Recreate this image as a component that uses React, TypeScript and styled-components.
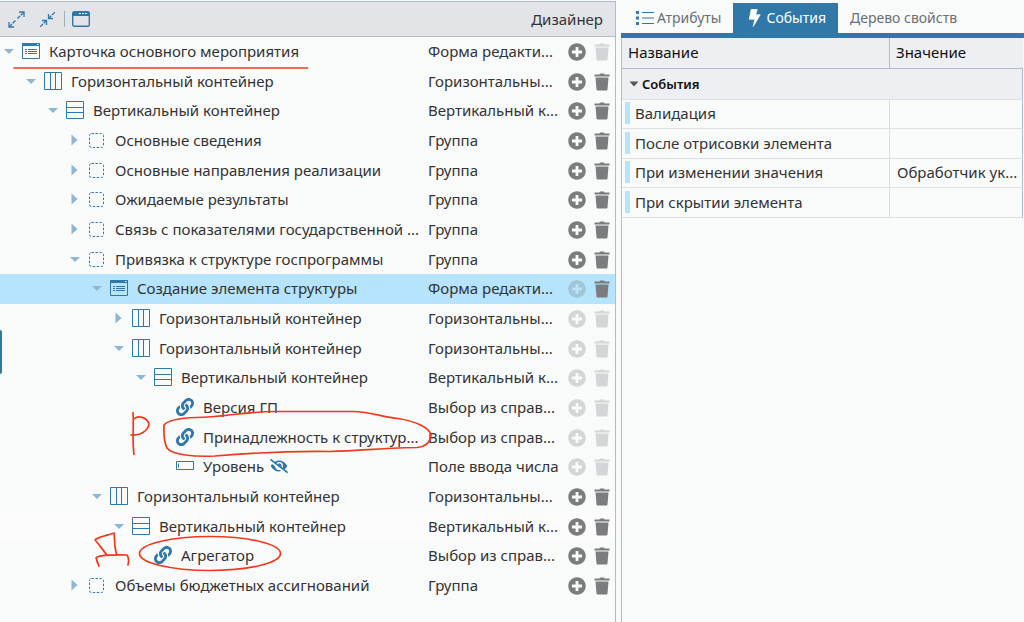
import React from "react";
import styled, { createGlobalStyle, css } from "styled-components";
import { FaEyeSlash, FaLink, FaPlusCircle } from "react-icons/fa";

const blue = "#2f78a7";
const line = "#b3bcc9";

const GlobalStyle = createGlobalStyle`
  *, *::before, *::after { box-sizing: border-box; }
  body {
    margin: 0;
    background: #f9fbfa;
    color: #333;
    font: 15px/20px "Noto Sans", "Open Sans", sans-serif;
  }
  button { font: inherit; color: inherit; }
`;

const Page = styled.div`
  position: relative;
  display: flex;
  gap: 5px;
  min-height: 100vh;
  overflow: hidden;
`;

const DesignerPanel = styled.section`
  flex: 1;
  min-width: 0;
  margin-top: 1px;
  border-top: 1px solid ${line};
  border-right: 1px solid ${line};
`;

const Toolbar = styled.header`
  display: flex;
  align-items: center;
  height: 35px;
  padding: 0 12px 0 8px;
  background: #e3e4e8;
  border-bottom: 1px solid ${line};
`;

const Title = styled.h1`
  margin: 0 0 0 auto;
  font-size: 15px;
  font-weight: 400;
`;

const IconButton = styled.button<{ $tone?: string }>`
  display: inline-flex;
  padding: 0;
  border: 0;
  background: none;
  color: ${(p) => p.$tone || blue};
`;

const ToolGroup = styled.div`
  display: flex;
  align-items: center;
  gap: 14px;
`;

const Divider = styled.span`
  width: 1px;
  height: 16px;
  margin: 0 7px 0 8px;
  background: #9eb0bf;
`;

const Tree = styled.table`
  width: 100%;
  border-collapse: collapse;
  table-layout: fixed;
`;

const TypeCol = styled.col`
  width: 137px;
`;

const ActionsCol = styled.col`
  width: 50px;
`;

const TreeRow = styled.tr<{ $selected?: boolean; $hovered?: boolean }>`
  height: 30px;
  &:nth-child(3n + 2) {
    height: 29px;
  }
  ${(p) => p.$selected && css`background: #b5e4fc;`}
  ${(p) => p.$hovered && css`background: #fdfcfd;`}
`;

const Cell = styled.td`
  padding: 0 0 2px;
  white-space: nowrap;
`;

const ActionsCell = styled.td`
  padding: 0;
`;

const Node = styled.div<{ $level: number }>`
  display: flex;
  align-items: center;
  padding-left: ${(p) => 3 + p.$level * 22}px;
`;

const Toggle = styled(IconButton)`
  width: 12px;
  margin-right: 7px;
  justify-content: center;
  color: #8fb6d1;
`;

const IconSlot = styled.span`
  display: inline-flex;
  justify-content: center;
  width: 18px;
  margin-right: 9px;
  color: ${blue};
`;

const Hidden = styled.span`
  display: inline-flex;
  margin-left: 6px;
  color: ${blue};
`;

const Actions = styled.div`
  display: flex;
  align-items: center;
  gap: 8px;
  padding-left: 3px;
`;

const PropertiesPanel = styled.section`
  width: 403px;
  display: flex;
  flex-direction: column;
`;

const Tabs = styled.div`
  display: flex;
  height: 38px;
  padding-top: 3px;
  border-bottom: 5px solid ${blue};
`;

const Tab = styled.button<{ $active?: boolean; $icon?: boolean }>`
  display: flex;
  align-items: center;
  gap: 3px;
  padding: 0 12px 0 ${(p) => (p.$icon ? 15 : 12)}px;
  border: 0;
  font-size: 14px;
  white-space: nowrap;
  color: ${(p) => (p.$active ? "#fff" : "#6b6f72")};
  background: ${(p) => (p.$active ? blue : "transparent")};
`;

const TableFrame = styled.div`
  flex: 1;
  margin-right: 1px;
  border-left: 1px solid ${line};
`;

const Props = styled.table`
  width: 100%;
  border-collapse: separate;
  border-spacing: 0;
  table-layout: fixed;
`;

const NameCol = styled.col`
  width: 267px;
`;

const HeadCell = styled.th`
  height: 31px;
  padding: 0 6px 2px;
  text-align: left;
  font-weight: 400;
  color: #111;
  background: #eeeff2;
  border-bottom: 1px solid ${line};
  & + & {
    border-left: 1px solid ${line};
  }
`;

const GroupCell = styled.th`
  height: 31px;
  padding: 0 7px;
  text-align: left;
  color: #111;
  font-size: 13px;
  background: #eeeff2;
  border-bottom: 1px solid #dddfe5;
  border-right: 1px solid ${line};
`;

const GroupToggle = styled.button`
  display: flex;
  align-items: center;
  gap: 3px;
  padding: 0;
  border: 0;
  background: none;
  font-weight: 600;
`;

const PropRow = styled.tr`
  height: 29px;
  &:nth-child(even) {
    height: 30px;
  }
`;

const PropName = styled.td`
  padding: 0 3px 2px;
  border-bottom: 1px solid #dddfe5;
`;

const PropLabel = styled.div`
  padding-left: 5px;
  line-height: 22px;
  border-left: 5px solid #b5e4fc;
`;

const PropValue = styled.td`
  padding: 0 7px 2px;
  white-space: nowrap;
  border-bottom: 1px solid #dddfe5;
  border-left: 1px solid #dddfe5;
  border-right: 1px solid ${line};
`;

const SideHandle = styled.button`
  position: absolute;
  left: 0;
  top: 330px;
  width: 2px;
  height: 44px;
  padding: 0;
  border: 0;
  border-radius: 0 2px 2px 0;
  background: ${blue};
`;

const Markup = styled.svg`
  position: absolute;
  left: 0;
  top: 0;
  pointer-events: none;
`;

type Kind = "form" | "columns" | "rows" | "group" | "link" | "input";

const NodeIcon = ({ kind }: { kind: Kind }) => {
  if (kind === "link") return <FaLink size={18} />;
  return (
    <svg width="18" height="18" viewBox="0 0 18 18" fill="none" stroke="currentColor">
      {kind === "form" && (
        <>
          <path d="M.5 1.500h17v15H.5z" />
          <path d="M0 1h18v3H0z" fill="currentColor" stroke="none" />
          <path d="M15 2.500h1.500" stroke="#fff" />
          <path d="M3 7.500h2M3 9.500h2M3 11.500h2M6 7.500h9M6 9.500h9M6 11.500h9" />
        </>
      )}
      {kind === "columns" && <path d="M.5.5h17v17H.5zM6.500.5v17M11.500.5v17" />}
      {kind === "rows" && <path d="M.5.5h17v17H.5zM.5 6.500h17M.5 11.500h17" />}
      {kind === "group" && (
        <rect x="1.500" y="2.500" width="14" height="14" rx="2" strokeDasharray="2.400 1.600" />
      )}
      {kind === "input" && <path d="M.5 4.500h17v8H.5zM2.500 6.500v4" />}
    </svg>
  );
};

const Caret = ({ open }: { open: boolean }) => (
  <svg width="12" height="12" viewBox="0 0 12 12" fill="currentColor">
    <path d={open ? "M1 4h10L6 9z" : "M2.500 0.500l6 5.500-6 5.500z"} />
  </svg>
);

const Bolt = () => (
  <svg width="15" height="18" viewBox="0 0 15 18" fill="currentColor">
    <path d="M3.200.5h6L7.600 5.800H12.200L5.200 17.500l1.700-7.300H1.300z" stroke="currentColor" strokeWidth=".8" strokeLinejoin="round" />
  </svg>
);

const Trash = () => (
  <svg width="16" height="18" viewBox="0 0 16 18" fill="currentColor">
    <path d="M.5 1.500h5l.5-1h4l.5 1h5v2H.5zM1.500 4.500h13l-1 12q-.1 1-1 1h-9q-.9 0-1-1z" />
  </svg>
);

interface Item {
  level: number;
  kind: Kind;
  label: string;
  type: string;
  open?: boolean;
  noAdd?: boolean;
  noDelete?: boolean;
  selected?: boolean;
  hovered?: boolean;
  hidden?: boolean;
}

const HOR = "Горизонтальный контейнер";
const VER = "Вертикальный контейнер";
const off = { noAdd: true, noDelete: true };

const items: Item[] = [
  { level: 0, kind: "form", label: "Карточка основного мероприятия", type: "Форма редакти...", open: true, noDelete: true },
  { level: 1, kind: "columns", label: HOR, type: "Горизонтальны...", open: true },
  { level: 2, kind: "rows", label: VER, type: "Вертикальный к...", open: true },
  { level: 3, kind: "group", label: "Основные сведения", type: "Группа", open: false },
  { level: 3, kind: "group", label: "Основные направления реализации", type: "Группа", open: false },
  { level: 3, kind: "group", label: "Ожидаемые результаты", type: "Группа", open: false },
  { level: 3, kind: "group", label: "Связь с показателями государственной ...", type: "Группа", open: false },
  { level: 3, kind: "group", label: "Привязка к структуре госпрограммы", type: "Группа", open: true },
  { level: 4, kind: "form", label: "Создание элемента структуры", type: "Форма редакти...", open: true, noAdd: true, selected: true },
  { level: 5, kind: "columns", label: HOR, type: "Горизонтальны...", open: false, ...off },
  { level: 5, kind: "columns", label: HOR, type: "Горизонтальны...", open: true, ...off },
  { level: 6, kind: "rows", label: VER, type: "Вертикальный к...", open: true, ...off },
  { level: 7, kind: "link", label: "Версия ГП", type: "Выбор из справ...", ...off },
  { level: 7, kind: "link", label: "Принадлежность к структур...", type: "Выбор из справ...", ...off },
  { level: 7, kind: "input", label: "Уровень", type: "Поле ввода числа", hidden: true, ...off },
  { level: 4, kind: "columns", label: HOR, type: "Горизонтальны...", open: true },
  { level: 5, kind: "rows", label: VER, type: "Вертикальный к...", open: true, hovered: true },
  { level: 6, kind: "link", label: "Агрегатор", type: "Выбор из справ..." },
  { level: 3, kind: "group", label: "Объемы бюджетных ассигнований", type: "Группа", open: false },
];

const events = [
  ["Валидация", ""],
  ["После отрисовки элемента", ""],
  ["При изменении значения", "Обработчик ук..."],
  ["При скрытии элемента", ""],
];

const tone = (disabled?: boolean, selected?: boolean) =>
  disabled ? (selected ? "#a0c4d8" : "#d4d5d6") : "#7b7c7e";

export default function App() {
  return (
    <Page>
      <GlobalStyle />
      <DesignerPanel>
        <Toolbar>
          <ToolGroup>
            <IconButton aria-label="Развернуть">
              <svg width="17" height="17" viewBox="0 0 17 17" fill="none" stroke="currentColor" strokeWidth="1.300">
                <path d="M11 1h5v5M1 11v5h5" />
                <path d="M15.500 1.500l-6 6M7.500 9.500l-6 6" strokeDasharray="4 1" />
              </svg>
            </IconButton>
            <IconButton aria-label="Свернуть">
              <svg width="17" height="17" viewBox="0 0 17 17" fill="none" stroke="currentColor" strokeWidth="1.300">
                <path d="M9.500 3v4.500h4.500M3 9.500h4.500v4.500" />
                <path d="M9.500 7.500l6.500-6.500M7.500 9.500l-6.500 6.500" strokeDasharray="4 1" />
              </svg>
            </IconButton>
          </ToolGroup>
          <Divider />
          <IconButton aria-label="Окно">
            <svg width="18" height="16" viewBox="0 0 18 16" fill="none" stroke="currentColor">
              <rect x=".7" y=".7" width="16.600" height="14.600" rx="1.500" strokeWidth="1.400" />
              <path d="M1 1h16v4H1z" fill="currentColor" stroke="none" />
              <path d="M7 2.500h2M10 2.500h2M13 2.500h2" stroke="#fff" />
            </svg>
          </IconButton>
          <Title>Дизайнер</Title>
        </Toolbar>
        <Tree role="treegrid" aria-label="Дизайнер">
          <colgroup>
            <col />
            <TypeCol />
            <ActionsCol />
          </colgroup>
          <tbody>
            {items.map((it, i) => (
              <TreeRow key={i} $selected={it.selected} $hovered={it.hovered} aria-level={it.level + 1}>
                <Cell>
                  <Node $level={it.level}>
                    <Toggle as={it.open === undefined ? "span" : "button"} aria-label={it.open === undefined ? undefined : "Узел"}>
                      {it.open !== undefined && <Caret open={it.open} />}
                    </Toggle>
                    <IconSlot><NodeIcon kind={it.kind} /></IconSlot>
                    {it.label}
                    {it.hidden && <Hidden><FaEyeSlash size={18} /></Hidden>}
                  </Node>
                </Cell>
                <Cell>{it.type}</Cell>
                <ActionsCell>
                  <Actions>
                    <IconButton aria-label="Добавить" disabled={it.noAdd} $tone={tone(it.noAdd, it.selected)}>
                      <FaPlusCircle size={18} />
                    </IconButton>
                    <IconButton aria-label="Удалить" disabled={it.noDelete} $tone={tone(it.noDelete, it.selected)}>
                      <Trash />
                    </IconButton>
                  </Actions>
                </ActionsCell>
              </TreeRow>
            ))}
          </tbody>
        </Tree>
      </DesignerPanel>

      <PropertiesPanel>
        <Tabs role="tablist">
          <Tab role="tab" $icon>
            <svg width="18" height="14" viewBox="0 0 18 14" fill={blue}>
              <path d="M0 0h3v3H0zM0 5.500h3v3H0zM0 11h3v3H0zM6 1h12v1H6zM6 6.500h12v1H6zM6 12h12v1H6z" />
            </svg>
            Атрибуты
          </Tab>
          <Tab role="tab" $icon $active aria-selected="true">
            <Bolt />
            События
          </Tab>
          <Tab role="tab">Дерево свойств</Tab>
        </Tabs>
        <TableFrame>
          <Props>
            <colgroup>
              <NameCol />
              <col />
            </colgroup>
            <thead>
              <tr>
                <HeadCell>Название</HeadCell>
                <HeadCell>Значение</HeadCell>
              </tr>
              <tr>
                <GroupCell colSpan={2}>
                  <GroupToggle aria-expanded="true">
                    <svg width="10" height="6" viewBox="0 0 10 6" fill="#555"><path d="M.5.5h9L5 5.500z" /></svg>
                    События
                  </GroupToggle>
                </GroupCell>
              </tr>
            </thead>
            <tbody>
              {events.map(([name, value]) => (
                <PropRow key={name}>
                  <PropName><PropLabel>{name}</PropLabel></PropName>
                  <PropValue>{value}</PropValue>
                </PropRow>
              ))}
            </tbody>
          </Props>
        </TableFrame>
      </PropertiesPanel>

      <SideHandle aria-label="Открыть панель" />
      <Markup width="440" height="622" viewBox="0 0 440 622" fill="none" stroke="#f0381c" strokeWidth="1.700" strokeLinecap="round" strokeLinejoin="round">
        <path d="M14 68H307.500" />
        <path d="M164 425C168 420 180 418 196 417.500C225 417 240 412 275 411.500H352C372 412 382 417 398 418.500C415 421 430 428 431 435C430 443 425 447 417 447.500C390 447.500 360 451 330 451.500C290 451 250 453 215 456C195 457 172 455 167 448C163 440 164 432 164 425Z" />
        <path d="M133 412.500C134 428 132 440 134 454.500M134 419C138 415 147 417 149 424C148 431 140 436 131 435" />
        <ellipse cx="210" cy="553.500" rx="70.500" ry="17" />
        <path d="M107 555C102 549 98 543 95 540C97 537 109 535 114 533C115 541 114 548 117 555M99 566C97 562 96 558 97 557C104 554 118 555 127 555C129 558 129 561 128 565M96 558L99 566" />
      </Markup>
    </Page>
  );
}
